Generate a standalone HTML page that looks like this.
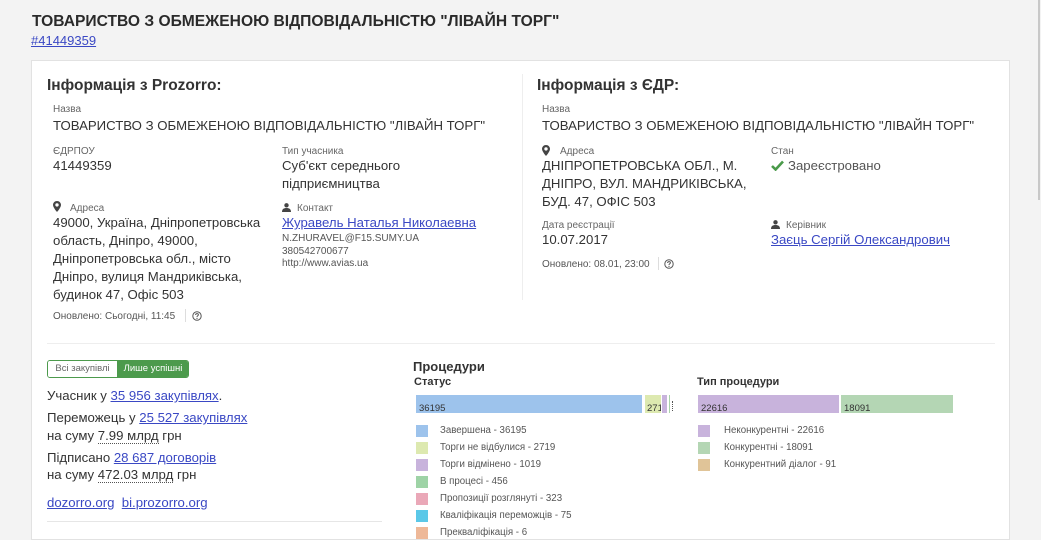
<!DOCTYPE html>
<html><head><meta charset="utf-8">
<style>
*{margin:0;padding:0;box-sizing:border-box}
body{width:1041px;height:534px;overflow:hidden;background:#f3f3f3;font-family:"Liberation Sans",Arial,sans-serif;color:#333;position:relative}
.a{position:absolute;white-space:nowrap}
a{color:#3a48c4;text-decoration:underline}
.lbl{font-size:10px;color:#666}
.val{font-size:13.2px;color:#333;line-height:18px}
.sm{font-size:10px;color:#555;line-height:12.5px}
.card{position:absolute;left:31px;top:60px;width:979px;height:480px;background:#fff;border:1px solid #e2e2e2}
.h2{font-size:15.5px;font-weight:bold;color:#333}
.sq{position:absolute;width:12px;height:12px}
.lg{position:absolute;font-size:9.7px;color:#555;white-space:nowrap}
.dot{border-bottom:1px dotted #555}
</style></head><body>
<div class="a" style="left:32px;top:13px;font-size:15.6px;font-weight:bold;color:#2a2a2a">ТОВАРИСТВО З ОБМЕЖЕНОЮ ВІДПОВІДАЛЬНІСТЮ "ЛІВАЙН ТОРГ"</div>
<div class="a" style="left:31px;top:33px;font-size:13px"><a href="#">#41449359</a></div>
<div style="position:absolute;left:1038px;top:0;width:2px;height:200px;background:#c8c8c8"></div>
<div class="card"></div>
<div style="position:absolute;left:522px;top:74px;width:1px;height:226px;background:#eee"></div>
<div style="position:absolute;left:47px;top:343px;width:948px;height:1px;background:#eee"></div>
<div style="position:absolute;left:47px;top:521px;width:335px;height:1px;background:#e6e6e6"></div>

<!-- Left column -->
<div class="a h2" style="left:47px;top:77px">Інформація з Prozorro:</div>
<div class="a lbl" style="left:53px;top:104px">Назва</div>
<div class="a val" style="left:53px;top:117px">ТОВАРИСТВО З ОБМЕЖЕНОЮ ВІДПОВІДАЛЬНІСТЮ "ЛІВАЙН ТОРГ"</div>
<div class="a lbl" style="left:53px;top:146px">ЄДРПОУ</div>
<div class="a val" style="left:53px;top:157px">41449359</div>
<div class="a lbl" style="left:282px;top:146px">Тип учасника</div>
<div class="a val" style="left:282px;top:157px">Суб'єкт середнього<br>підприємництва</div>
<svg class="a" style="left:53px;top:201px" width="8" height="11" viewBox="0 0 8 11"><path d="M4 0C1.8 0 0 1.7 0 3.9 0 6.6 4 11 4 11S8 6.6 8 3.9C8 1.7 6.2 0 4 0Zm0 5.6A1.7 1.7 0 1 1 4 2.2a1.7 1.7 0 0 1 0 3.4Z" fill="#444"/></svg>
<div class="a lbl" style="left:70px;top:203px">Адреса</div>
<div class="a val" style="left:53px;top:214px">49000, Україна, Дніпропетровська<br>область, Дніпро, 49000,<br>Дніпропетровська обл., місто<br>Дніпро, вулиця Мандриківська,<br>будинок 47, Офіс 503</div>
<svg class="a" style="left:282px;top:203px" width="9" height="9" viewBox="0 0 9 9"><circle cx="4.5" cy="2.3" r="2.2" fill="#444"/><path d="M0 9C0 6 1.8 5 4.5 5S9 6 9 9Z" fill="#444"/></svg>
<div class="a lbl" style="left:297px;top:203px">Контакт</div>
<div class="a val" style="left:282px;top:214px"><a href="#">Журавель Наталья Николаевна</a></div>
<div class="a sm" style="left:282px;top:233px">N.ZHURAVEL@F15.SUMY.UA<br>380542700677<br>http://www.avias.ua</div>
<div class="a" style="left:53px;top:311px;font-size:10px;color:#555">Оновлено: Сьогодні, 11:45</div>
<div style="position:absolute;left:185px;top:309px;width:1px;height:13px;background:#ddd"></div>
<svg class="a" style="left:192px;top:311px" width="10" height="10" viewBox="0 0 10 10"><circle cx="5" cy="5" r="4.2" fill="none" stroke="#555" stroke-width="1"/><path d="M3.6 4C3.6 3 4.3 2.6 5 2.6S6.4 3 6.4 3.8C6.4 4.8 5 4.8 5 6" fill="none" stroke="#555" stroke-width="1"/><circle cx="5" cy="7.4" r=".6" fill="#555"/></svg>

<!-- Right column -->
<div class="a h2" style="left:537px;top:77px">Інформація з ЄДР:</div>
<div class="a lbl" style="left:542px;top:104px">Назва</div>
<div class="a val" style="left:542px;top:117px">ТОВАРИСТВО З ОБМЕЖЕНОЮ ВІДПОВІДАЛЬНІСТЮ "ЛІВАЙН ТОРГ"</div>
<svg class="a" style="left:542px;top:145px" width="8" height="11" viewBox="0 0 8 11"><path d="M4 0C1.8 0 0 1.7 0 3.9 0 6.6 4 11 4 11S8 6.6 8 3.9C8 1.7 6.2 0 4 0Zm0 5.6A1.7 1.7 0 1 1 4 2.2a1.7 1.7 0 0 1 0 3.4Z" fill="#444"/></svg>
<div class="a lbl" style="left:560px;top:146px">Адреса</div>
<div class="a val" style="left:542px;top:157px">ДНІПРОПЕТРОВСЬКА ОБЛ., М.<br>ДНІПРО, ВУЛ. МАНДРИКІВСЬКА,<br>БУД. 47, ОФІС 503</div>
<div class="a lbl" style="left:771px;top:146px">Стан</div>
<svg class="a" style="left:771px;top:160px" width="13" height="11" viewBox="0 0 13 11"><path d="M1 6L4.6 9.5 12 1.5" fill="none" stroke="#4a9a4a" stroke-width="2.6"/></svg>
<div class="a val" style="left:788px;top:157px;color:#555">Зареєстровано</div>
<div class="a lbl" style="left:542px;top:220px">Дата реєстрації</div>
<div class="a val" style="left:542px;top:231px">10.07.2017</div>
<svg class="a" style="left:771px;top:220px" width="9" height="9" viewBox="0 0 9 9"><circle cx="4.5" cy="2.3" r="2.2" fill="#444"/><path d="M0 9C0 6 1.8 5 4.5 5S9 6 9 9Z" fill="#444"/></svg>
<div class="a lbl" style="left:786px;top:220px">Керівник</div>
<div class="a val" style="left:771px;top:231px"><a href="#">Заєць Сергій Олександрович</a></div>
<div class="a" style="left:542px;top:259px;font-size:10px;color:#555">Оновлено: 08.01, 23:00</div>
<div style="position:absolute;left:658px;top:257px;width:1px;height:13px;background:#ddd"></div>
<svg class="a" style="left:664px;top:259px" width="10" height="10" viewBox="0 0 10 10"><circle cx="5" cy="5" r="4.2" fill="none" stroke="#555" stroke-width="1"/><path d="M3.6 4C3.6 3 4.3 2.6 5 2.6S6.4 3 6.4 3.8C6.4 4.8 5 4.8 5 6" fill="none" stroke="#555" stroke-width="1"/><circle cx="5" cy="7.4" r=".6" fill="#555"/></svg>

<!-- Toggle -->
<div style="position:absolute;left:47px;top:360px;width:142px;height:18px;border:1px solid #4c9a4c;border-radius:3px;overflow:hidden;font-size:9.5px">
<div style="position:absolute;left:0;top:0;width:69px;height:16px;line-height:16px;text-align:center;color:#666;background:#fff">Всі закупівлі</div>
<div style="position:absolute;left:69px;top:0;width:72px;height:16px;line-height:16px;text-align:center;color:#fff;background:#4c9a4c">Лише успішні</div>
</div>
<div class="a val" style="left:47px;top:387px">Учасник у <a href="#">35 956 закупівлях</a>.</div>
<div class="a val" style="left:47px;top:409px">Переможець у <a href="#">25 527 закупівлях</a></div>
<div class="a val" style="left:47px;top:427px">на суму <span class="dot">7.99 млрд</span> грн</div>
<div class="a val" style="left:47px;top:449px">Підписано <a href="#">28 687 договорів</a></div>
<div class="a val" style="left:47px;top:466px">на суму <span class="dot">472.03 млрд</span> грн</div>
<div class="a val" style="left:47px;top:494px"><a href="#">dozorro.org</a> &nbsp;<a href="#">bi.prozorro.org</a></div>

<!-- Charts -->
<div class="a" style="left:413px;top:359px;font-size:13px;font-weight:bold;color:#333">Процедури</div>
<div class="a" style="left:414px;top:376px;font-size:11px;font-weight:bold;color:#333">Статус</div>
<div style="position:absolute;left:416px;top:395px;width:226px;height:18px;background:#9dc3ec"></div>
<div class="a" style="left:419px;top:403px;font-size:9.5px;color:#333">36195</div>
<div style="position:absolute;left:645px;top:395px;width:16px;height:18px;background:#dde9b0"></div>
<div class="a" style="left:647px;top:403px;font-size:9.5px;color:#333;width:14px;overflow:hidden">2719</div>
<div style="position:absolute;left:662px;top:395px;width:5px;height:18px;background:#c8b3dc"></div>
<div style="position:absolute;left:669px;top:395px;width:1px;height:18px;background:#a9d3a9"></div>
<div style="position:absolute;left:672px;top:401px;width:1px;height:10px;border-left:1px dotted #555"></div>

<div class="sq" style="left:416px;top:425px;background:#9dc3ec"></div><div class="lg" style="left:440px;top:425px">Завершена - 36195</div>
<div class="sq" style="left:416px;top:442px;background:#dde9b0"></div><div class="lg" style="left:440px;top:442px">Торги не відбулися - 2719</div>
<div class="sq" style="left:416px;top:459px;background:#c8b3dc"></div><div class="lg" style="left:440px;top:459px">Торги відмінено - 1019</div>
<div class="sq" style="left:416px;top:476px;background:#9ed3a6"></div><div class="lg" style="left:440px;top:476px">В процесі - 456</div>
<div class="sq" style="left:416px;top:493px;background:#eaa8b8"></div><div class="lg" style="left:440px;top:493px">Пропозиції розглянуті - 323</div>
<div class="sq" style="left:416px;top:510px;background:#5bc8e8"></div><div class="lg" style="left:440px;top:510px">Кваліфікація переможців - 75</div>
<div class="sq" style="left:416px;top:527px;background:#eeb898"></div><div class="lg" style="left:440px;top:527px">Прекваліфікація - 6</div>

<div class="a" style="left:697px;top:376px;font-size:11px;font-weight:bold;color:#333">Тип процедури</div>
<div style="position:absolute;left:698px;top:395px;width:141px;height:18px;background:#c8b3dc"></div>
<div class="a" style="left:701px;top:403px;font-size:9.5px;color:#333">22616</div>
<div style="position:absolute;left:841px;top:395px;width:112px;height:18px;background:#b4d6b4"></div>
<div class="a" style="left:844px;top:403px;font-size:9.5px;color:#333">18091</div>
<div class="sq" style="left:698px;top:425px;background:#c8b3dc"></div><div class="lg" style="left:724px;top:425px">Неконкурентні - 22616</div>
<div class="sq" style="left:698px;top:442px;background:#b4d6b4"></div><div class="lg" style="left:724px;top:442px">Конкурентні - 18091</div>
<div class="sq" style="left:698px;top:459px;background:#e0c498"></div><div class="lg" style="left:724px;top:459px">Конкурентний діалог - 91</div>
</body></html>
